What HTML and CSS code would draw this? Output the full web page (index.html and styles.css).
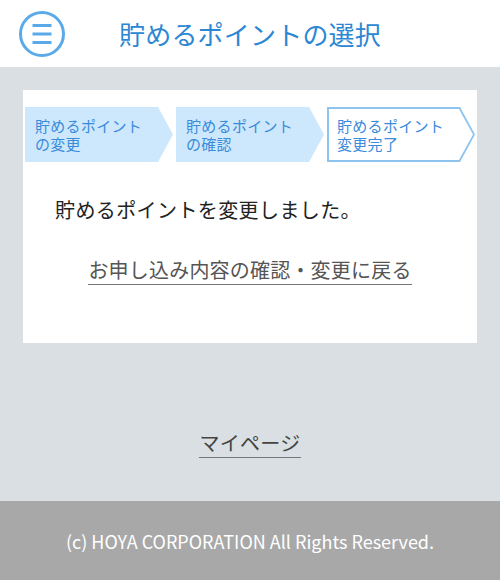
FILE: index.html
```html
<!DOCTYPE html>
<html lang="ja">
<head>
<meta charset="utf-8">
<title>貯めるポイントの選択</title>
<link rel="stylesheet" href="styles.css">
</head>
<body>
<header class="header">
  <div class="menu-cell">
    <svg class="menu-icon" width="48" height="48" viewBox="0 0 48 48" aria-hidden="true">
      <circle cx="24" cy="24" r="21.5" fill="none" stroke="#5aaaea" stroke-width="3"/>
      <rect x="14.5" y="14" width="19" height="3" fill="#5aaaea"/>
      <rect x="14.5" y="22.5" width="19" height="3" fill="#5aaaea"/>
      <rect x="14.5" y="31" width="19" height="3" fill="#5aaaea"/>
    </svg>
  </div>
  <h1 class="title">貯めるポイントの選択</h1>
  <div></div>
</header>
<main class="main">
  <section class="card">
    <ol class="steps">
      <li class="step"><span class="step-text">貯めるポイント<br>の変更</span></li>
      <li class="step"><span class="step-text">貯めるポイント<br>の確認</span></li>
      <li class="step current"><span class="step-text">貯めるポイント<br>変更完了</span></li>
    </ol>
    <p class="message">貯めるポイントを変更しました。</p>
    <div class="link-row"><a class="link" href="#">お申し込み内容の確認・変更に戻る</a></div>
  </section>
  <div class="mypage-row"><a class="link mypage" href="#">マイページ</a></div>
</main>
<footer class="footer">(c) HOYA CORPORATION All Rights Reserved.</footer>
</body>
</html>
```
FILE: styles.css
```css
html, body {
  margin: 0;
  padding: 0;
}
body {
  width: 500px;
  font-family: "Noto Sans CJK JP", "Noto Sans", sans-serif;
  background: #d9dfe2;
}
.header {
  height: 67px;
  background: #ffffff;
  display: grid;
  grid-template-columns: 1fr auto 1fr;
  align-items: center;
}
.menu-cell {
  padding-left: 18px;
  display: flex;
  align-items: center;
}
.menu-icon {
  display: block;
}
.title {
  margin: 0;
  font-size: 26px;
  font-weight: normal;
  line-height: 34px;
  color: #2b87d3;
  letter-spacing: 0.2px;
}
.main {
  padding: 23px 23px 0;
}
.card {
  background: #ffffff;
  height: 253px;
  box-sizing: border-box;
  padding-top: 17px;
}
.steps {
  list-style: none;
  margin: 0;
  padding: 0 0 0 2px;
  display: flex;
  gap: 3px;
}
.step {
  position: relative;
  width: 148px;
  height: 55px;
  background: #cde7fc;
  clip-path: polygon(0 0, 133px 0, 148px 50%, 133px 100%, 0 100%);
  display: flex;
  align-items: center;
  box-sizing: border-box;
  padding-left: 10px;
}
.step.current {
  background: #8cc3ef;
}
.step.current::before {
  content: "";
  position: absolute;
  inset: 0;
  background: #ffffff;
  clip-path: polygon(2px 2px, 132px 2px, 146px 50%, 132px 53px, 2px 53px);
}
.step-text {
  position: relative;
  font-size: 15px;
  line-height: 18px;
  color: #3b8bdb;
  letter-spacing: 0.3px;
}
.message {
  margin: 34px 0 0;
  padding-left: 32px;
  font-size: 20px;
  line-height: 28px;
  color: #222222;
  letter-spacing: 0.4px;
}
.link-row {
  margin-top: 32px;
  text-align: center;
}
.link {
  display: inline-block;
  font-size: 20px;
  line-height: 28px;
  color: #555555;
  text-decoration: none;
  border-bottom: 1px solid #777777;
  letter-spacing: 0.2px;
}
.mypage-row {
  margin-top: 86px;
  padding-bottom: 43px;
  text-align: center;
}
.mypage {
  color: #444444;
  letter-spacing: 0.3px;
}
.footer {
  height: 79px;
  background: #a8a8a8;
  color: #ffffff;
  font-size: 18px;
  display: flex;
  align-items: center;
  justify-content: center;
}
```
